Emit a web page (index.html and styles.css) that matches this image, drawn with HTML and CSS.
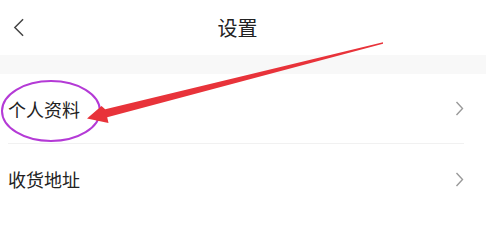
FILE: index.html
```html
<!DOCTYPE html>
<html lang="zh-CN">
<head>
<meta charset="utf-8">
<title>设置</title>
<link rel="stylesheet" href="styles.css">
</head>
<body>
<div class="page">
  <header class="header">
    <div class="back">
      <svg width="12" height="22" viewBox="0 0 12 22"><path d="M11 1.5 L2 10.5 L11 19.5" fill="none" stroke="#444" stroke-width="1.6"/></svg>
    </div>
    <div class="title">设置</div>
  </header>
  <div class="band"></div>
  <ul class="list">
    <li class="row"><span class="label">个人资料</span>
      <svg class="chev" width="9" height="15" viewBox="0 0 9 15"><path d="M1.5 1 L7.5 7.5 L1.5 14" fill="none" stroke="#9a9a9a" stroke-width="1.4"/></svg>
    </li>
    <li class="row"><span class="label">收货地址</span>
      <svg class="chev" width="9" height="15" viewBox="0 0 9 15"><path d="M1.5 1 L7.5 7.5 L1.5 14" fill="none" stroke="#9a9a9a" stroke-width="1.4"/></svg>
    </li>
  </ul>
  <svg class="annot" width="486" height="203" viewBox="0 0 486 203">
    <ellipse cx="51" cy="111" rx="49" ry="30" fill="none" stroke="#b43ad6" stroke-width="2"/>
    <polygon points="87,118.5 108.5,123 107.2,117.2 383,43.8 383,42.3 105.2,109.2 101.5,106" fill="#e8333a"/>
  </svg>
</div>
</body>
</html>
```
FILE: styles.css
```css
* { box-sizing: border-box; }
html, body { margin: 0; padding: 0; background: #fff; }
body {
  font-family: "Noto Sans CJK SC", "Noto Sans", sans-serif;
  color: #222;
}
.page { position: relative; width: 486px; height: 203px; overflow: hidden; }
.header {
  height: 55px;
  display: flex;
  align-items: center;
  background: #fff;
}
.back { width: 24px; padding-left: 13px; display: flex; align-items: center; }
.title {
  flex: 1;
  text-align: center;
  font-size: 20px;
  line-height: 1;
  padding-right: 35px;
  color: #222;
}
.band { height: 19px; background: #f8f8f8; }
.list { list-style: none; margin: 0; padding: 0; }
.row {
  height: 70px;
  margin: 0 22px 0 8px;
  display: flex;
  align-items: center;
  justify-content: space-between;
  border-bottom: 1px solid #f1f1f1;
}
.row:last-child { border-bottom: none; }
.label { font-size: 18px; line-height: 1; color: #222; }
.chev { display: block; }
.annot { position: absolute; left: 0; top: 0; pointer-events: none; }
```
